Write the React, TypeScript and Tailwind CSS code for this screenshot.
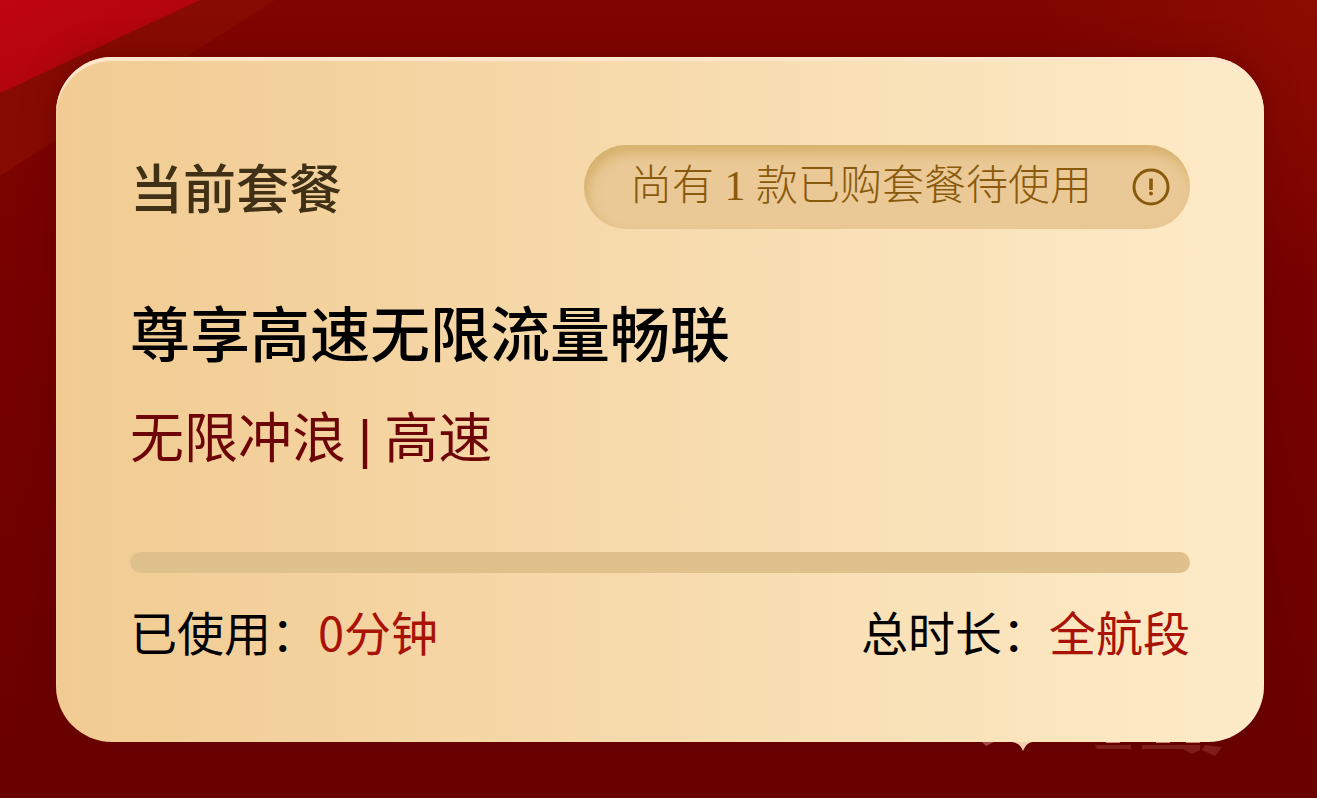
import React from 'react';

const Backdrop = () => (
  <svg className="absolute left-0 top-0" width="300" height="190" aria-hidden="true">
    <defs>
      <linearGradient id="ray" x1="0" y1="0" x2="1" y2="1">
        <stop offset="0" stopColor="#bf0510" />
        <stop offset="1" stopColor="#a8050b" />
      </linearGradient>
    </defs>
    <path d="M0 0H275L0 176Z" fill="#870b01" />
    <path d="M0 0H200L0 93Z" fill="url(#ray)" />
  </svg>
);

// faint light specks along the lower edge of the card
const Glints = () => (
  <svg className="absolute right-10 top-full" width="244" height="16" aria-hidden="true">
    <path d="M2 0h12l-8 4z" fill="#a04a40" />
    <path d="M32 0h20q-6 1-9 9q-3-8-11-9z" fill="#f3cfae" />
    <path d="M115 3h36v4h-34zM162 3h58v5l-8 4-9-5h-41z" fill="#7f1d18" />
    <path d="M126 0h14v1h-14zM176 0h14v1h-14zM206 0h14v1h-14z" fill="#c98a6a" />
    <path d="M225 3l17 2-7 9-13-6z" fill="#7f1d18" />
  </svg>
);

const InfoIcon = () => (
  <svg width="38" height="38" viewBox="0 0 38 38" fill="none" aria-hidden="true">
    <circle cx="19" cy="19" r="17" stroke="#8a5a0c" strokeWidth="3" />
    <path d="M17.200 10.500h3.600v11.500h-3.600z" fill="#8a5a0c" />
    <circle cx="19" cy="25.500" r="2" fill="#8a5a0c" />
  </svg>
);

type StatProps = {
  label: string;
  value: string;
};

const Stat = ({ label, value }: StatProps) => (
  <div className="flex">
    <dt className="text-black">{`${label}\uff1a`}</dt>
    <dd className="text-[#a91206]">{value}</dd>
  </div>
);

const App = () => {
  const used = 0;

  return (
    <div
      lang="zh-CN"
      className="relative min-h-screen overflow-hidden bg-[radial-gradient(circle_at_top_right,#8c0c00,transparent_280px),linear-gradient(#800500,#740000_50%,#6a0000)] pl-14 pr-[53px] pt-[57px] pb-14 font-['Noto_Sans_CJK_SC',sans-serif]"
    >
      <Backdrop />
      <main className="relative rounded-[56px] bg-linear-to-r from-[#f1cb92] to-[#fdebc8] px-[74px] pt-[88px] pb-[75px] shadow-[inset_0_4px_1px_#ffe6cd,0_0_32px_rgba(90,0,0,0.5)]">
        <div className="flex items-center justify-between">
          <h2 className="pb-0.5 text-[53px] leading-[80px] font-medium text-[#3f3016]">当前套餐</h2>
          <button
            type="button"
            className="flex h-[84px] items-center gap-10 rounded-full bg-[#eac996] pl-[46px] pr-5 shadow-[inset_4px_8px_12px_rgba(200,160,80,0.6)]"
          >
            <span className="pb-0.5 font-['Liberation_Serif','Noto_Sans_CJK_SC',serif] text-[42px] leading-[60px] font-light text-[#8a5a0c]">
              尚有 1 款已购套餐待使用
            </span>
            <InfoIcon />
          </button>
        </div>

        <h1 className="mt-[62px] text-[60px] leading-[80px] font-medium text-black">尊享高速无限流量畅联</h1>
        <p className="mt-6 text-[54px] leading-[80px] text-[#6c0408]">
          无限冲浪 <span className="font-['Liberation_Sans',sans-serif]">|</span> 高速
        </p>

        <div
          role="progressbar"
          aria-label="已使用"
          aria-valuenow={used}
          className="mt-[73px] h-[21px] overflow-hidden rounded-full bg-[#dfc28b]"
        >
          <div className="h-full bg-[#a91206]" style={{ width: `${used}%` }} />
        </div>

        <dl className="mt-[22px] flex justify-between text-[47px] leading-[72px]">
          <Stat label="已使用" value={`${used}分钟`} />
          <Stat label="总时长" value="全航段" />
        </dl>
        <Glints />
      </main>
    </div>
  );
};

export default App;
